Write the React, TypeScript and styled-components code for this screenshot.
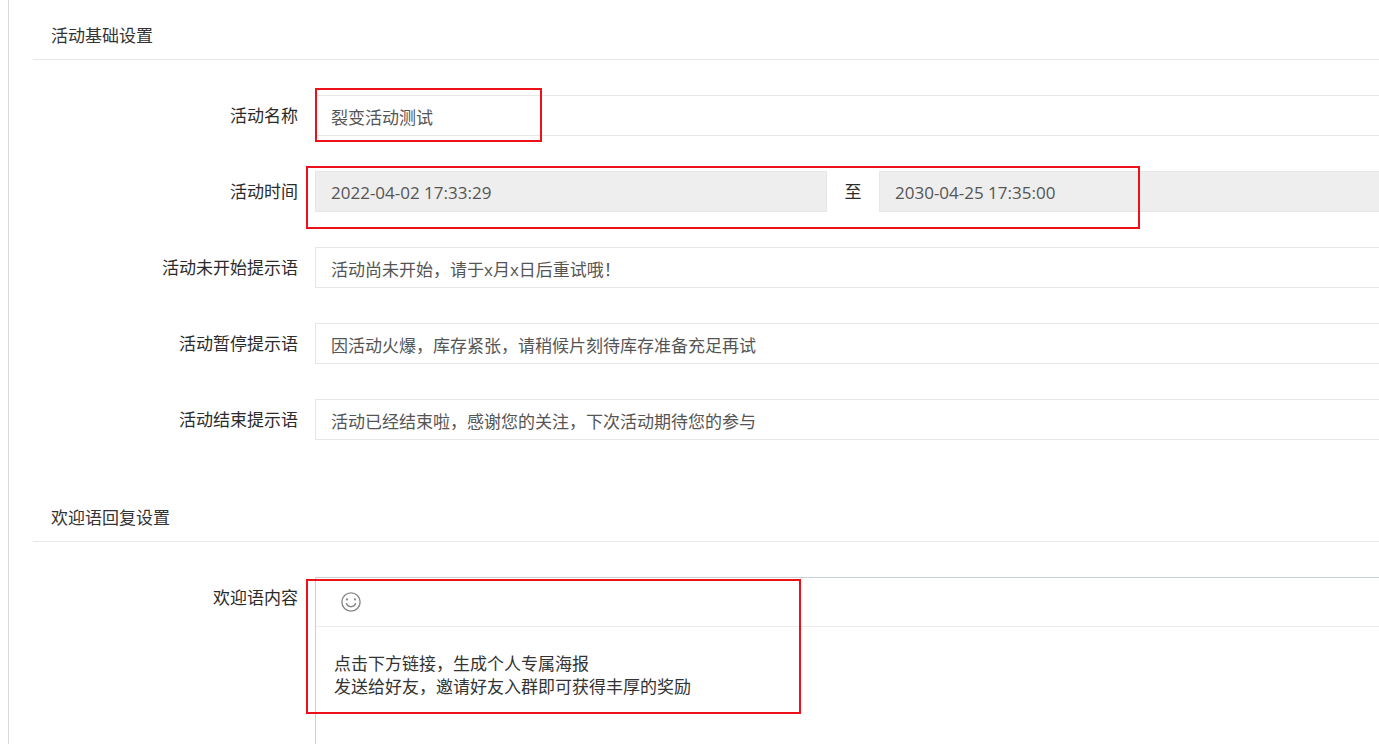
import React from 'react';
import styled, { createGlobalStyle, css } from 'styled-components';

const GlobalStyle = createGlobalStyle`
  * { box-sizing: border-box; }
  body {
    margin: 0;
    background: #fff;
    color: #2b2b2b;
    font-family: "Open Sans", "Noto Sans CJK SC", sans-serif;
    font-size: 17px;
    font-weight: 400;
    line-height: 23px;
  }
  input, textarea, button { font: inherit; margin: 0; }
`;

const Page = styled.div`
  height: 100vh;
  overflow: hidden;
  padding-left: 8px;
`;

const Panel = styled.main`
  min-height: 100%;
  margin-right: -12px;
  padding: 12px 0 0 24px;
  border-left: 1px solid #d9d9d9;
`;

const Section = styled.section`
  margin-bottom: 54px;
`;

const SectionTitle = styled.h2`
  height: 48px;
  margin: 0;
  padding: 0 18px;
  border-bottom: 1px solid #e8e8e8;
  color: #333;
  font-size: 17px;
  font-weight: 400;
  line-height: 48px;
`;

const Fields = styled.div`
  display: grid;
  row-gap: 35px;
  padding-top: 35px;
`;

const FieldRow = styled.div`
  display: grid;
  grid-template-columns: 265px minmax(0, 1fr);
  column-gap: 17px;
`;

const Label = styled.label`
  text-align: right;
  line-height: 41px;
`;

const Control = styled.div`
  position: relative;
  display: flex;
  min-width: 0;
`;

const TextInput = styled.input`
  flex: 1;
  min-width: 0;
  height: 41px;
  padding: 1px 15px 0;
  border: 1px solid #e6e6e6;
  border-radius: 0;
  outline: 0;
  background: #fff;
  color: #555;

  &:read-only {
    background: #eee;
  }
`;

const Separator = styled.span`
  width: 52px;
  text-align: center;
  line-height: 41px;
`;

const Editor = styled.div`
  flex: 1;
  border: 1px solid #c8d2d6;
`;

const Toolbar = styled.div`
  display: flex;
  align-items: center;
  height: 49px;
  padding: 0 25px;
  border-bottom: 1px solid #ebebeb;
`;

const IconButton = styled.button`
  display: flex;
  padding: 0;
  border: 0;
  background: none;
  color: #888;
  cursor: pointer;
`;

const Message = styled.textarea`
  display: block;
  width: 100%;
  padding: 25px 18px;
  border: 0;
  outline: 0;
  resize: none;
  background: none;
  color: #333;
`;

const marks = {
  name: css`inset: -7px auto auto 0; width: 227px; height: 54px;`,
  time: css`inset: -5px auto auto -9px; width: 834px; height: 63px;`,
  message: css`inset: 2px auto auto -9px; width: 495px; height: 135px;`,
};

const Highlight = styled.span<{ $mark: keyof typeof marks }>`
  position: absolute;
  border: 2px solid #ed1219;
  pointer-events: none;
  ${(p) => marks[p.$mark]}
`;

function SmileIcon() {
  return (
    <svg width="20" height="20" viewBox="0 0 20 20" fill="none" stroke="currentColor" strokeWidth="1.4" aria-hidden="true">
      <circle cx="10" cy="10" r="9.1" />
      <path d="M5.4 11.6c.7 2 2.4 3.1 4.6 3.1s3.9-1.1 4.6-3.1" strokeLinecap="round" />
      <circle cx="6" cy="7.4" r="1.1" fill="currentColor" stroke="none" />
      <circle cx="14" cy="7.4" r="1.1" fill="currentColor" stroke="none" />
    </svg>
  );
}

const prompts = [
  { id: 'not-started', label: '活动未开始提示语', value: '活动尚未开始，请于x月x日后重试哦！' },
  { id: 'paused', label: '活动暂停提示语', value: '因活动火爆，库存紧张，请稍候片刻待库存准备充足再试' },
  { id: 'ended', label: '活动结束提示语', value: '活动已经结束啦，感谢您的关注，下次活动期待您的参与' },
];

export default function App() {
  return (
    <Page>
      <GlobalStyle />
      <Panel>
        <Section>
          <SectionTitle>活动基础设置</SectionTitle>
          <Fields>
            <FieldRow>
              <Label htmlFor="name">活动名称</Label>
              <Control>
                <TextInput id="name" defaultValue="裂变活动测试" />
                <Highlight $mark="name" />
              </Control>
            </FieldRow>
            <FieldRow>
              <Label htmlFor="start">活动时间</Label>
              <Control>
                <TextInput id="start" readOnly value="2022-04-02 17:33:29" />
                <Separator>至</Separator>
                <TextInput aria-label="活动结束时间" readOnly value="2030-04-25 17:35:00" />
                <Highlight $mark="time" />
              </Control>
            </FieldRow>
            {prompts.map((p) => (
              <FieldRow key={p.id}>
                <Label htmlFor={p.id}>{p.label}</Label>
                <Control>
                  <TextInput id={p.id} defaultValue={p.value} />
                </Control>
              </FieldRow>
            ))}
          </Fields>
        </Section>
        <Section>
          <SectionTitle>欢迎语回复设置</SectionTitle>
          <Fields>
            <FieldRow>
              <Label htmlFor="message">欢迎语内容</Label>
              <Control>
                <Editor>
                  <Toolbar>
                    <IconButton type="button" aria-label="表情">
                      <SmileIcon />
                    </IconButton>
                  </Toolbar>
                  <Message
                    id="message"
                    rows={8}
                    defaultValue={'点击下方链接，生成个人专属海报\n发送给好友，邀请好友入群即可获得丰厚的奖励'}
                  />
                </Editor>
                <Highlight $mark="message" />
              </Control>
            </FieldRow>
          </Fields>
        </Section>
      </Panel>
    </Page>
  );
}
